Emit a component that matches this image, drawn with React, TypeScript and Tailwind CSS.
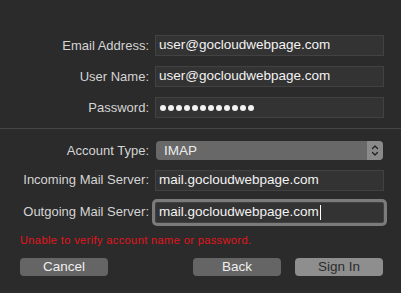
import React from 'react';

function Field({ label, value, focused }: { label: string; value: React.ReactNode; focused?: boolean }) {
  return (
    <div className="flex items-center">
      <div className="w-[149px] shrink-0 text-right text-[13px] text-[#d4d4d4]">{label}</div>
      <div
        className={`ml-[6px] flex h-[21px] w-[229px] items-center border border-[#424242] bg-[#333333] pl-[3px] text-[13.5px] text-[#f2f2f2] ${
          focused ? 'rounded-[2px] shadow-[0_0_0_3px_#7b7b7b]' : ''
        }`}
      >
        {value}
      </div>
    </div>
  );
}

function Dots() {
  return (
    <div className="flex gap-[2px] pl-[1px]">
      {Array.from({ length: 12 }).map((_, i) => (
        <span key={i} className="h-[6px] w-[6px] rounded-full bg-[#f2f2f2]" />
      ))}
    </div>
  );
}

export default function App() {
  return (
    <div className="h-[293px] w-[401px] overflow-hidden bg-[#2b2b2b] font-['Liberation_Sans',Arial,sans-serif]">
      <div className="flex flex-col gap-[10px] pt-[35px]">
        <Field label="Email Address:" value="user@gocloudwebpage.com" />
        <Field label="User Name:" value="user@gocloudwebpage.com" />
        <Field label="Password:" value={<Dots />} />
      </div>

      <div className="mt-[10px] h-px w-full bg-[#464646]" />

      <div className="mt-[12px] flex items-center">
        <div className="w-[149px] shrink-0 text-right text-[13px] text-[#d4d4d4]">Account Type:</div>
        <div className="ml-[7px] flex h-[19px] w-[227px] items-stretch overflow-hidden rounded-[4px] bg-[#686868]">
          <div className="flex flex-1 items-center pl-[8px] text-[13.5px] text-[#ececec]">IMAP</div>
          <div className="flex w-[16px] items-center justify-center bg-[#8a8a8a]">
            <svg width="8" height="13" viewBox="0 0 8 13" fill="none" stroke="#1e1e1e" strokeWidth="1.2" strokeLinecap="round" strokeLinejoin="round">
              <path d="M1.5 4.5 L4 2 L6.5 4.5" />
              <path d="M1.5 8.5 L4 11 L6.5 8.5" />
            </svg>
          </div>
        </div>
      </div>

      <div className="mt-[9px] flex flex-col gap-[11px]">
        <Field label="Incoming Mail Server:" value="mail.gocloudwebpage.com" />
        <Field
          label="Outgoing Mail Server:"
          focused
          value={
            <>
              mail.gocloudwebpage.com
              <span className="ml-[1px] h-[15px] w-px bg-white" />
            </>
          }
        />
      </div>

      <div className="mt-[11px] pl-[20px] text-[11px] leading-[13px] tracking-[0.4px] text-[#e3141b]">
        Unable to verify account name or password.
      </div>

      <div className="mt-[11px] flex items-center px-[18px]">
        <button className="ml-[2px] h-[18px] w-[88px] rounded-[4px] bg-[#656565] text-[13.5px] leading-[18px] text-[#eeeeee]">
          Cancel
        </button>
        <div className="flex-1" />
        <button className="h-[18px] w-[88px] rounded-[4px] bg-[#656565] text-[13.5px] leading-[18px] text-[#eeeeee]">
          Back
        </button>
        <button className="ml-[14px] h-[18px] w-[88px] rounded-[4px] bg-[#8e8e8e] text-[13.5px] leading-[18px] text-[#2c2c2c]">
          Sign In
        </button>
      </div>
    </div>
  );
}
